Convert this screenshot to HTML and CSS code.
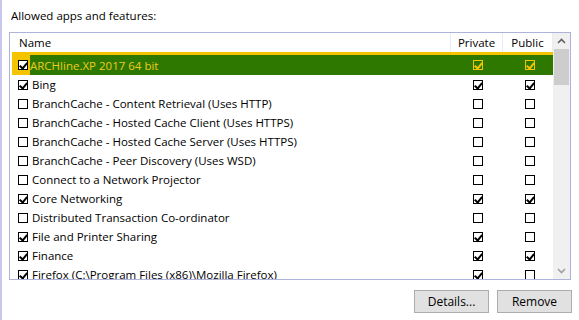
FILE: index.html
```html
<!DOCTYPE html>
<html lang="en">

<head>
    <meta charset="utf-8">
    <title>Allowed apps</title>
    <link rel="stylesheet" href="styles.css">
</head>

<body>
    <p class="title">Allowed apps and features:</p>

    <div class="listbox">
        <div class="list">
            <div class="head">
                <div class="col_name">Name</div>
                <div class="col_priv">Private</div>
                <div class="col_pub">Public</div>
            </div>

            <div class="row selected">
                <div class="col_name"><span class="cb_cell"><span class="cb on"></span></span>ARCHline.XP 2017 64 bit</div>
                <div class="col_priv"><span class="cb on"></span></div>
                <div class="col_pub"><span class="cb on"></span></div>
            </div>
            <div class="row">
                <div class="col_name"><span class="cb_cell"><span class="cb on"></span></span>Bing</div>
                <div class="col_priv"><span class="cb on"></span></div>
                <div class="col_pub"><span class="cb on"></span></div>
            </div>
            <div class="row">
                <div class="col_name"><span class="cb_cell"><span class="cb"></span></span>BranchCache - Content Retrieval (Uses HTTP)</div>
                <div class="col_priv"><span class="cb"></span></div>
                <div class="col_pub"><span class="cb"></span></div>
            </div>
            <div class="row">
                <div class="col_name"><span class="cb_cell"><span class="cb"></span></span>BranchCache - Hosted Cache Client (Uses HTTPS)</div>
                <div class="col_priv"><span class="cb"></span></div>
                <div class="col_pub"><span class="cb"></span></div>
            </div>
            <div class="row">
                <div class="col_name"><span class="cb_cell"><span class="cb"></span></span>BranchCache - Hosted Cache Server (Uses HTTPS)</div>
                <div class="col_priv"><span class="cb"></span></div>
                <div class="col_pub"><span class="cb"></span></div>
            </div>
            <div class="row">
                <div class="col_name"><span class="cb_cell"><span class="cb"></span></span>BranchCache - Peer Discovery (Uses WSD)</div>
                <div class="col_priv"><span class="cb"></span></div>
                <div class="col_pub"><span class="cb"></span></div>
            </div>
            <div class="row">
                <div class="col_name"><span class="cb_cell"><span class="cb"></span></span>Connect to a Network Projector</div>
                <div class="col_priv"><span class="cb"></span></div>
                <div class="col_pub"><span class="cb"></span></div>
            </div>
            <div class="row">
                <div class="col_name"><span class="cb_cell"><span class="cb on"></span></span>Core Networking</div>
                <div class="col_priv"><span class="cb on"></span></div>
                <div class="col_pub"><span class="cb on"></span></div>
            </div>
            <div class="row">
                <div class="col_name"><span class="cb_cell"><span class="cb"></span></span>Distributed Transaction Co-ordinator</div>
                <div class="col_priv"><span class="cb"></span></div>
                <div class="col_pub"><span class="cb"></span></div>
            </div>
            <div class="row">
                <div class="col_name"><span class="cb_cell"><span class="cb on"></span></span>File and Printer Sharing</div>
                <div class="col_priv"><span class="cb on"></span></div>
                <div class="col_pub"><span class="cb"></span></div>
            </div>
            <div class="row">
                <div class="col_name"><span class="cb_cell"><span class="cb on"></span></span>Finance</div>
                <div class="col_priv"><span class="cb on"></span></div>
                <div class="col_pub"><span class="cb on"></span></div>
            </div>
            <div class="row">
                <div class="col_name"><span class="cb_cell"><span class="cb on"></span></span>Firefox (C:\Program Files (x86)\Mozilla Firefox)</div>
                <div class="col_priv"><span class="cb on"></span></div>
                <div class="col_pub"><span class="cb"></span></div>
            </div>
        </div>

        <div class="scrollbar">
            <div class="arrow">
                <svg width="9" height="6" viewBox="0 0 9 6"><polyline points="1,5 4.5,1.5 8,5" fill="none" stroke="#606060" stroke-width="1.6"/></svg>
            </div>
            <div class="thumb"></div>
            <div class="track"></div>
            <div class="arrow">
                <svg width="9" height="6" viewBox="0 0 9 6"><polyline points="1,1 4.5,4.5 8,1" fill="none" stroke="#a0a0a0" stroke-width="1.6"/></svg>
            </div>
        </div>
    </div>

    <div class="buttons">
        <button>Details...</button>
        <button>Remove</button>
    </div>
</body>

</html>
```

FILE: styles.css
```css
* {
    box-sizing: border-box;
    margin: 0;
    font-family: 'Open Sans', 'Liberation Sans', sans-serif;
}

body {
    width: 579px;
    height: 320px;
    overflow: hidden;
    background-color: white;
    border-left: 2px solid #c8c8ee;
    font-size: 11.5px;
    color: #000;
}

.title {
    padding: 6px 0 0 9px;
    line-height: 19px;
}

/* list box */

.listbox {
    display: flex;
    width: 562px;
    height: 248px;
    margin: 7px 0 0 7px;
    border: 1px solid #aeb3dc;
    overflow: hidden;
}

.list {
    flex: 1;
    overflow: hidden;
}

.head,
.row {
    display: flex;
    height: 19px;
    line-height: 19px;
    white-space: nowrap;
}

.head .col_name {
    padding-left: 7px;
}

.head .col_priv,
.head .col_pub {
    border-left: 1px solid #e8ecf4;
    text-align: center;
}

.head .col_pub {
    border-right: 1px solid #e8ecf4;
}

.col_name {
    flex: 1;
    display: flex;
    align-items: center;
    margin-left: 2px;
}

.col_priv {
    width: 52px;
}

.col_pub {
    width: 51px;
}

.row .col_priv,
.row .col_pub {
    display: flex;
    align-items: center;
    justify-content: center;
    padding-left: 4px;
}

.cb_cell {
    display: flex;
    align-items: center;
    align-self: stretch;
    width: 20px;
    padding-left: 6px;
}

.cb {
    display: inline-block;
    position: relative;
    width: 10px;
    height: 10px;
    border: 1px solid #000;
    background-color: #fff;
}

.cb.on::after {
    content: "";
    position: absolute;
    left: 2px;
    top: 0;
    width: 3px;
    height: 6px;
    border: solid #000;
    border-width: 0 2px 2px 0;
    transform: rotate(40deg);
}

/* selected row */

.selected {
    height: 23px;
    border-top: 3px solid #f5c400;
    margin-left: 2px;
    background-color: #2f7800;
    color: #eccb1e;
}

.selected .col_name {
    margin-left: 0;
}

.selected .cb_cell {
    background-color: #f5c400;
    width: 18px;
}

.selected .col_priv .cb,
.selected .col_pub .cb {
    border-color: #f5c400;
    background-color: transparent;
}

.selected .col_priv .cb::after,
.selected .col_pub .cb::after {
    border-color: #f5c400;
}

/* scrollbar */

.scrollbar {
    display: flex;
    flex-direction: column;
    width: 17px;
    background-color: #f0f0f0;
}

.arrow {
    display: flex;
    align-items: center;
    justify-content: center;
    height: 16px;
}

.thumb {
    height: 36px;
    margin: 0 1px;
    background-color: #cdcdcd;
}

.track {
    flex: 1;
}

/* buttons */

.buttons {
    display: flex;
    justify-content: flex-end;
    gap: 8px;
    margin-top: 10px;
    padding-right: 7px;
}

button {
    width: 75px;
    height: 23px;
    border: 1px solid #adadad;
    background-color: #e1e1e1;
    font-size: 12px;
    color: #000;
    padding: 0;
}
```
